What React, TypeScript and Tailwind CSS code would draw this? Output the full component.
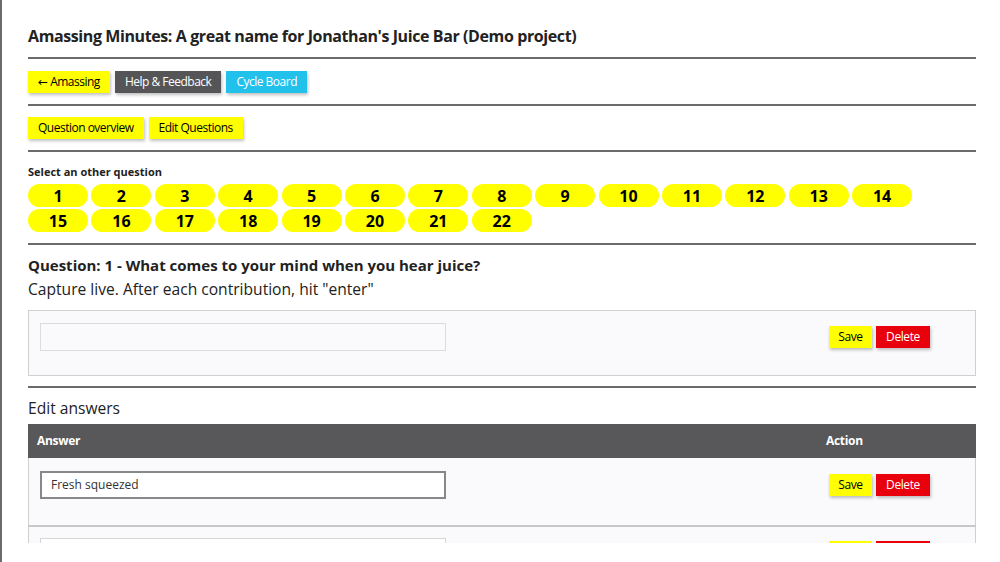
const font = { fontFamily: '"Open Sans", "DejaVu Sans", sans-serif' };

const numbers = Array.from({ length: 22 }, (_, i) => i + 1);

function Rule() {
  return <div className="h-[2px] bg-[#6b6b6b]" />;
}

function SaveDelete() {
  return (
    <div className="flex gap-[4px]">
      <button className="h-[22px] w-[43px] bg-[#ffff00] text-[12px] tracking-[-0.4px] text-black shadow-[1px_2px_3px_rgba(0,0,0,0.25)]">
        Save
      </button>
      <button className="h-[22px] w-[54px] bg-[#e8000d] text-[12px] tracking-[-0.4px] text-white shadow-[1px_2px_3px_rgba(0,0,0,0.25)]">
        Delete
      </button>
    </div>
  );
}

export default function App() {
  return (
    <div className="h-[562px] w-[1000px] border-l-2 border-[#6b6b6b] bg-white text-[#222]" style={font}>
      <div className="h-[543px] overflow-hidden pl-[26px] pr-[24px]">
        <h1 className="pt-[26px] pb-[11px] text-[16px] font-bold leading-[20px] tracking-[-0.4px] text-[#222]">
          Amassing Minutes: A great name for Jonathan's Juice Bar (Demo project)
        </h1>
        <Rule />

        <div className="flex gap-[5px] pt-[12px] pb-[11px] text-[12px] tracking-[-0.5px]">
          <button className="h-[22px] bg-[#ffff00] px-[10px] text-black shadow-[1px_2px_3px_rgba(0,0,0,0.25)]">
            ← Amassing
          </button>
          <button className="h-[22px] bg-[#555558] px-[10px] text-white shadow-[1px_2px_3px_rgba(0,0,0,0.25)]">
            Help &amp; Feedback
          </button>
          <button className="h-[22px] bg-[#22c1ec] px-[10px] text-white shadow-[1px_2px_3px_rgba(0,0,0,0.25)]">
            Cycle Board
          </button>
        </div>
        <Rule />

        <div className="flex gap-[5px] pt-[11px] pb-[11px] text-[12px] tracking-[-0.5px]">
          <button className="h-[22px] bg-[#ffff00] px-[10px] text-black shadow-[1px_2px_3px_rgba(0,0,0,0.25)]">
            Question overview
          </button>
          <button className="h-[22px] bg-[#ffff00] px-[10px] text-black shadow-[1px_2px_3px_rgba(0,0,0,0.25)]">
            Edit Questions
          </button>
        </div>
        <Rule />

        <div className="pt-[13px] text-[11px] font-bold leading-[14px] text-[#222]">Select an other question</div>
        <div className="flex w-[900px] flex-wrap gap-x-[3.4px] gap-y-[2px] pt-[5px] pb-[11px]">
          {numbers.map((n) => (
            <div
              key={n}
              className="flex h-[23px] w-[60px] items-center justify-center rounded-full bg-[#ffff00] text-[16px] font-bold text-black"
            >
              {n}
            </div>
          ))}
        </div>
        <Rule />

        <div className="pt-[10px] text-[15px] font-bold leading-[20px] text-[#222]">
          Question: 1 - What comes to your mind when you hear juice?
        </div>
        <div className="pt-[4px] text-[15.6px] leading-[20px] text-[#222]">Capture live. After each contribution, hit "enter"</div>

        <div className="mt-[11px] flex h-[66px] items-start border border-[#d0d0d0] bg-[#fafafc] pl-[11px] pr-[45px] pt-[12px]">
          <div className="h-[28px] w-[406px] border border-[#dcdcdc] bg-[#fafafc]" />
          <div className="ml-auto pt-[3px]">
            <SaveDelete />
          </div>
        </div>
        <div className="mt-[10px]">
          <Rule />
        </div>

        <div className="pt-[10px] text-[15.6px] leading-[20px] text-[#222]">Edit answers</div>

        <div className="mt-[6px]">
          <div className="flex h-[34px] items-center bg-[#58585a] text-[12px] font-bold tracking-[-0.3px] text-white">
            <div className="pl-[9px]">Answer</div>
            <div className="ml-auto w-[150px]">Action</div>
          </div>
          <div className="flex h-[67px] items-start border-x border-[#d0d0d0] bg-[#fafafc] pl-[11px] pr-[45px] pt-[13px]">
            <div className="flex h-[28px] w-[406px] items-center border-2 border-[#888] bg-white pl-[9px] text-[12px] text-[#333]">
              Fresh squeezed
            </div>
            <div className="ml-auto pt-[3px]">
              <SaveDelete />
            </div>
          </div>
          <div className="h-[2px] bg-[#c8c8c8]" />
          <div className="flex h-[67px] items-start border-x border-[#d0d0d0] bg-[#fafafc] pl-[11px] pr-[45px] pt-[11px]">
            <div className="h-[28px] w-[406px] border border-[#d6d6d6] bg-white" />
            <div className="ml-auto pt-[3px]">
              <SaveDelete />
            </div>
          </div>
        </div>
      </div>
    </div>
  );
}
